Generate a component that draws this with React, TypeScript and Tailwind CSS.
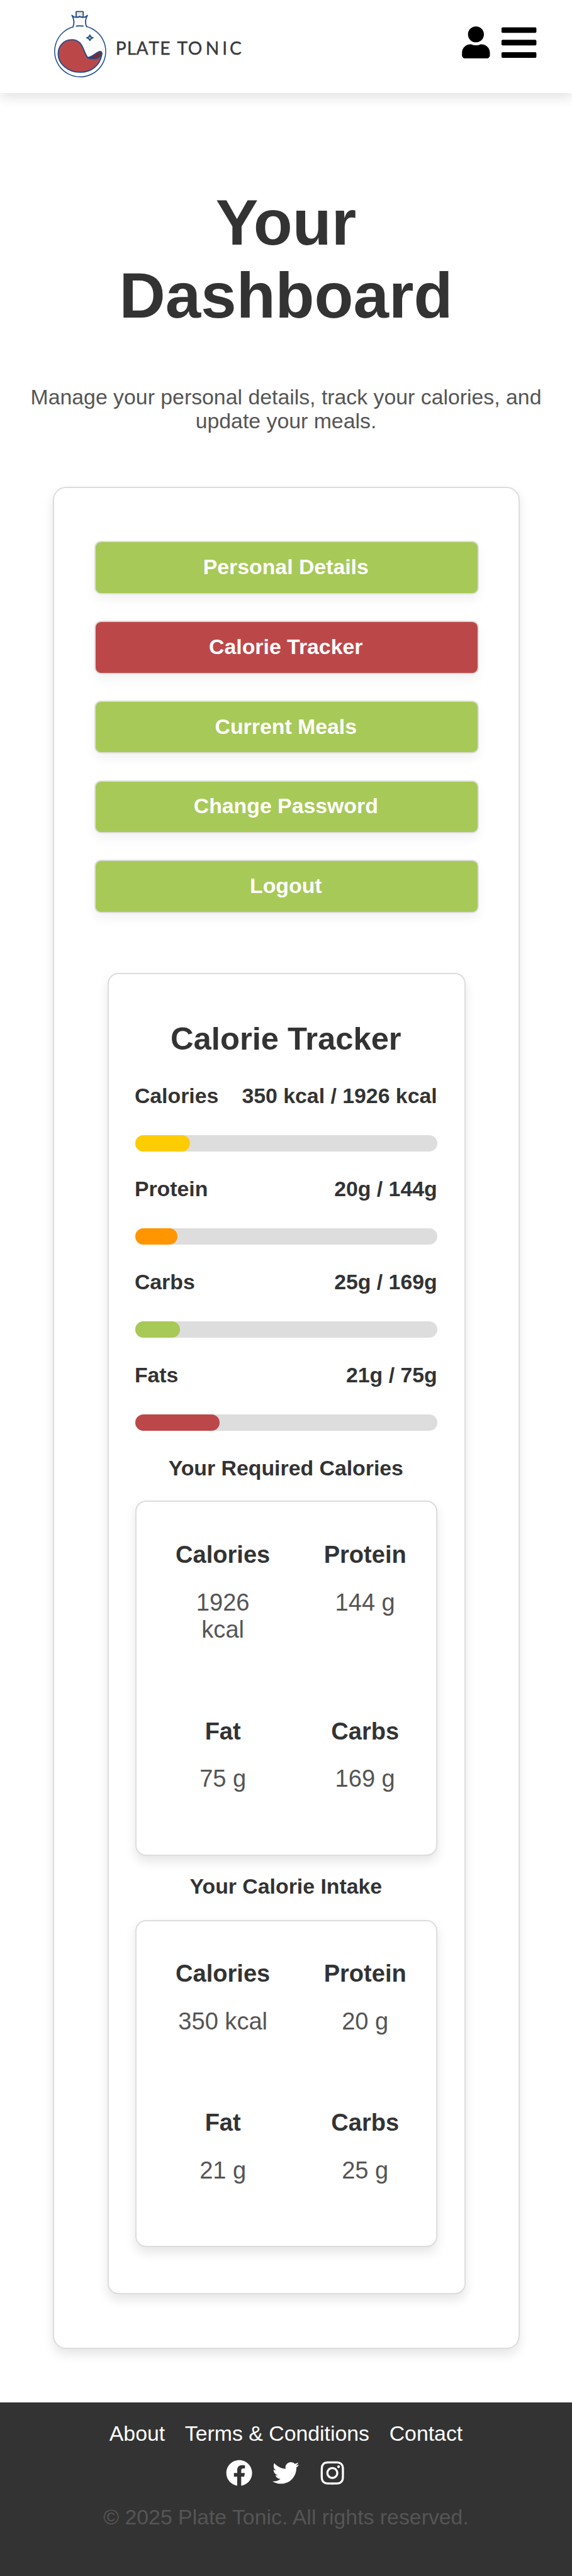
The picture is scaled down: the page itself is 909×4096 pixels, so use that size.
import { FaUser, FaBars, FaFacebook, FaTwitter, FaInstagram } from "react-icons/fa";

const navItems = ["Personal Details", "Calorie Tracker", "Current Meals", "Change Password", "Logout"];

const progress = [
  { label: "Calories", value: "350 kcal / 1926 kcal", percent: 18.17, color: "bg-[#ffcc00]" },
  { label: "Protein", value: "20g / 144g", percent: 13.8, color: "bg-[#ff9500]" },
  { label: "Carbs", value: "25g / 169g", percent: 14.7, color: "bg-[#a7c957]" },
  { label: "Fats", value: "21g / 75g", percent: 27.9, color: "bg-[#bc4749]" },
];

const required = [
  ["Calories", "1926 kcal"],
  ["Protein", "144 g"],
  ["Fat", "75 g"],
  ["Carbs", "169 g"],
];

const intake = [
  ["Calories", "350 kcal"],
  ["Protein", "20 g"],
  ["Fat", "21 g"],
  ["Carbs", "25 g"],
];

function Logo() {
  return (
    <svg className="block h-[120px] w-[310px]" viewBox="110 15 440 170.3" aria-label="Plate Tonic">
      <g fill="none" stroke="#1f4e8c" strokeWidth="2.6" strokeLinecap="round" strokeLinejoin="round">
        <path d="M171 37 V26.500 Q171 25.500 172 25.500 H186 Q187 25.500 187 26.500 V37 Q183 39 179 36.500 Q175 39 171 37Z" fill="#f2e6cf" />
        <path d="M164 60 Q169 47 161.500 34 Q166 39 172 38.500 Q176 39 179 36.500 Q182 39 186 38.500 Q192 39 196.500 34 Q189 47 194.500 59.500" />
        <path d="M171.500 58.300 Q179 57 186.500 58.300" />
        <path d="M164 60 A57.600 57.600 0 1 0 194.500 59.500" strokeWidth="2.2" />
        <path d="M130.500 121 C130.500 103 144 89 160 89 C188 88 186 117 197.500 129.500 C211 127 219 115 226 115.500 C229.500 117 229.500 121 228.500 124 C224 148 204 162.500 180 162.500 C152 162.500 130.500 143 130.500 121Z" fill="#bc4749" />
        <path d="M197.500 129.500 C211 127 219 114.500 225.500 115.500 C230 118 229 133 208 132 Q201 132 197.500 129.500Z" fill="#7b2c2f" />
        <path d="M202 78.500 Q203.500 83.500 209 84.700 Q203.500 86 202 90.800 Q200.500 86 195 84.700 Q200.500 83.500 202 78.500Z" fill="#a7c957" />
      </g>
      <text
        x="260.2 285.7 306.5 334.500 360.2 373 399 423.2 463.2 500.8 517.2"
        y="122.2"
        fontSize="40"
        fontFamily="Lato, 'Liberation Sans', sans-serif"
        fill="#3a3a3a"
        stroke="#3a3a3a"
        strokeWidth="0.6"
      >
        PLATE TONIC
      </text>
    </svg>
  );
}

function MacroCard({ items }: { items: string[][] }) {
  return (
    <div className="grid grid-cols-[226px_226px] gap-y-[117.400px] rounded-[17px] border-2 border-[#ddd] bg-white pt-[62.300px] pb-[97.500px] pl-[24.400px] shadow-[0_8.500px_17px_rgba(0,0,0,0.1)]">
      {items.map(([name, value]) => (
        <div key={name} className="flex flex-col items-center pr-px text-center text-[38.050px] leading-[43.800px]">
          <h4 className="font-bold text-[#333]">{name}</h4>
          <p className="mt-8 max-w-[150px] text-[#555]">{value}</p>
        </div>
      ))}
    </div>
  );
}

export default function App() {
  return (
    <div className="flex h-[4096px] w-[909px] flex-col bg-white font-['Liberation_Sans',Arial,sans-serif] text-[33.820px] text-[#333]">
      <header className="flex h-[148px] shrink-0 items-start justify-between bg-white pt-[10.600px] pr-[53px] pl-[77.500px] shadow-[0_8.500px_17px_rgba(0,0,0,0.1)]">
        <Logo />
        <div className="flex gap-[10.600px] pt-[25px] text-black">
          <FaUser className="mt-[6.500px] size-[50.700px]" />
          <FaBars className="size-[63.400px]" />
        </div>
      </header>

      <main className="flex flex-col items-center">
        <h1 className="mt-[148px] w-[600px] text-center text-[101.470px] leading-[116.300px] font-bold">Your Dashboard</h1>
        <p className="mt-[83px] w-[840px] text-center leading-[38.100px] text-[#555]">
          Manage your personal details, track your calories, and update your meals.
        </p>

        <section className="mt-[86px] ml-[1.600px] flex h-[2961px] w-[741.800px] flex-col items-center rounded-[21px] border-2 border-[#ddd] bg-white pt-[84.500px] shadow-[0_8.500px_17px_rgba(0,0,0,0.1)]">
          <nav className="flex w-[611px] flex-col gap-[42.300px]">
            {navItems.map((item) => (
              <button
                key={item}
                className={`flex h-[84.500px] items-center justify-center rounded-[10.600px] border-2 border-[#ddd] pr-[2px] pb-[2px] leading-[39px] font-bold text-white shadow-[0_8.500px_17px_rgba(0,0,0,0.05)] ${item === "Calorie Tracker" ? "bg-[#bc4749]" : "bg-[#a7c957]"}`}
              >
                {item}
              </button>
            ))}
          </nav>

          <div className="mt-[95.500px] h-[2101px] w-[568.600px] rounded-[17px] border-2 border-[#ddd] bg-white px-[42.300px] pt-[73.800px] shadow-[0_8.500px_17px_rgba(0,0,0,0.1)]">
            <h2 className="pr-[2px] text-center text-[50.740px] leading-[58px] font-bold">Calorie Tracker</h2>
            <div className="mt-[42px] flex flex-col gap-[40.400px]">
              {progress.map((row) => (
                <div key={row.label}>
                  <div className="-ml-[1.400px] flex justify-between pr-[0.600px] leading-[39px] font-bold">
                    <span>{row.label}</span>
                    <span>{row.value}</span>
                  </div>
                  <div className="mt-[43.200px] h-[25.400px] rounded-full bg-[#ddd]">
                    <div className={`h-full rounded-full ${row.color}`} style={{ width: `${row.percent}%` }} />
                  </div>
                </div>
              ))}
            </div>
            <h3 className="mt-[39.900px] mb-[32.800px] pr-[2px] text-center leading-[39px] font-bold">Your Required Calories</h3>
            <MacroCard items={required} />
            <h3 className="mt-[29.700px] mb-[33.500px] pr-[2px] text-center leading-[39px] font-bold">Your Calorie Intake</h3>
            <MacroCard items={intake} />
          </div>
        </section>
      </main>

      <footer className="mt-[85px] flex flex-1 flex-col items-center bg-[#333] pt-[30px]">
        <nav className="flex gap-[31.700px] leading-[39px] text-white">
          <a>About</a>
          <a>Terms &amp; Conditions</a>
          <a>Contact</a>
        </nav>
        <div className="mt-[22.200px] flex gap-[31.700px] text-[42.300px] text-white">
          <FaFacebook />
          <FaTwitter />
          <FaInstagram />
        </div>
        <p className="mt-[29.800px] leading-[39px] text-[#555]">© 2025 Plate Tonic. All rights reserved.</p>
      </footer>
    </div>
  );
}
